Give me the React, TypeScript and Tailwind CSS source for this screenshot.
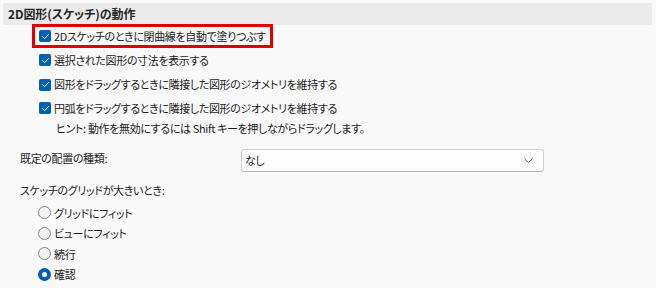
import type { ReactNode } from 'react';

const font = "font-['Noto_Sans_CJK_JP','Noto_Sans',sans-serif] [font-feature-settings:'palt']";

function CheckBox() {
  return (
    <span className="flex h-[12px] w-[12px] shrink-0 items-center justify-center rounded-[2px] bg-[#005fb8]">
      <svg width="9" height="9" viewBox="0 0 10 10" fill="none">
        <path d="M1.8 5.2 L4 7.3 L8.3 2.8" stroke="white" strokeWidth="1.1" strokeLinecap="round" strokeLinejoin="round" />
      </svg>
    </span>
  );
}

function Radio({ checked }: { checked?: boolean }) {
  if (checked) {
    return (
      <span className="flex h-[13px] w-[13px] shrink-0 items-center justify-center rounded-full bg-[#005fb8]">
        <span className="h-[5px] w-[5px] rounded-full bg-white" />
      </span>
    );
  }
  return <span className="h-[13px] w-[13px] shrink-0 rounded-full border border-[#858585] bg-[#f3f3f3]" />;
}

function CheckRow({ children, className }: { children: ReactNode; className?: string }) {
  return (
    <div className={`flex items-center gap-[3px] whitespace-nowrap pl-[36px] ${className ?? ''}`}>
      <CheckBox />
      <span>{children}</span>
    </div>
  );
}

export default function App() {
  return (
    <div className={`h-[288px] w-[656px] overflow-hidden bg-[#f9f9f9] pl-[3px] pr-[4px] pt-[3px] text-[11px] tracking-[-0.35px] text-[#1b1b1b] ${font}`}>
      {/* Section header */}
      <div className="flex h-[22px] items-center bg-[#ebebeb] pl-[5px] text-[12px] font-semibold tracking-[-0.1px] text-[#262626]">
        2D図形(スケッチ)の動作
      </div>

      {/* Checkboxes */}
      <div className="-mt-px ml-[29px] flex h-[24px] w-[241px] items-center gap-[3px] whitespace-nowrap border-[3px] border-[#e00000] pl-[4px]">
        <CheckBox />
        <span>2Dスケッチのときに閉曲線を自動で塗りつぶす</span>
      </div>
      <CheckRow className="h-[24px]">選択された図形の寸法を表示する</CheckRow>
      <CheckRow className="h-[25px]">図形をドラッグするときに隣接した図形のジオメトリを維持する</CheckRow>
      <CheckRow className="h-[22px]">円弧をドラッグするときに隣接した図形のジオメトリを維持する</CheckRow>
      <div className="flex h-[18px] items-center whitespace-nowrap pl-[53px]">
        ヒント: 動作を無効にするには Shift キーを押しながらドラッグします。
      </div>

      {/* Default placement */}
      <div className="mt-[12px] flex items-start">
        <span className="w-[238px] pl-[17px] pt-[1px]">既定の配置の種類:</span>
        <div className="flex h-[23px] w-[303px] items-center justify-between rounded-[3px] border border-[#d0d0d0] border-b-[#b8b8b8] bg-[#fdfdfd] pl-[3px] pr-[10px]">
          <span>なし</span>
          <svg width="9" height="6" viewBox="0 0 9 6" fill="none">
            <path d="M0.8 1 L4.5 4.6 L8.2 1" stroke="#606060" strokeWidth="1" strokeLinecap="round" strokeLinejoin="round" />
          </svg>
        </div>
      </div>

      {/* Grid behaviour */}
      <div className="mt-[10px] pl-[17px]">スケッチのグリッドが大きいとき:</div>
      <div className="mt-[4px] flex flex-col">
        {[
          ['グリッドにフィット', false],
          ['ビューにフィット', false],
          ['続行', false],
          ['確認', true],
        ].map(([label, checked]) => (
          <div key={label as string} className="flex h-[20.5px] items-center gap-[3px] pl-[35px]">
            <Radio checked={checked as boolean} />
            <span>{label}</span>
          </div>
        ))}
      </div>
    </div>
  );
}
